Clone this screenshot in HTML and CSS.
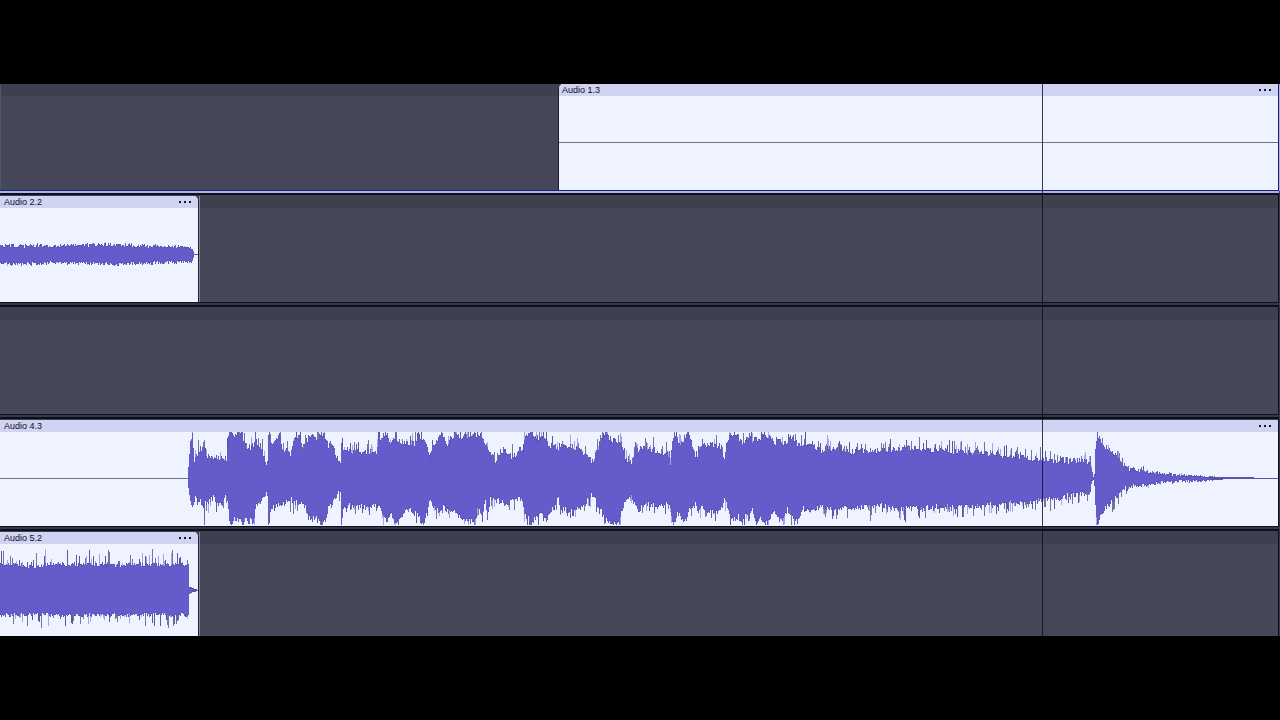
FILE: index.html
```
<!DOCTYPE html>
<html lang="en">
<head>
    <meta charset="UTF-8">
    <meta name="viewport" content="width=device-width, initial-scale=1.0">
    <title>Audio Tracks</title>
    <link rel="stylesheet" href="styles.css">
</head>
<body>
    <main class="timeline">
        <section class="track track-first selected">
            <div class="lane"></div>
            <article class="clip clip-start">
                <header class="clip-header">
                    <span>Audio 1.3</span>
                    <button type="button" class="clip-menu" aria-label="Audio 1.3 menu"><i></i><i></i><i></i></button>
                </header>
                <div class="clip-body"><hr class="silence"></div>
            </article>
        </section>

        <section class="track track-short">
            <article class="clip clip-end">
                <header class="clip-header">
                    <span>Audio 2.2</span>
                    <button type="button" class="clip-menu" aria-label="Audio 2.2 menu"><i></i><i></i><i></i></button>
                </header>
                <div class="clip-body">
                    <svg class="wave" data-wave="audio2" viewBox="0 0 199 94" preserveAspectRatio="none"></svg>
                </div>
            </article>
            <div class="lane"></div>
        </section>

        <section class="track">
            <div class="lane"></div>
        </section>

        <section class="track">
            <article class="clip">
                <header class="clip-header">
                    <span>Audio 4.3</span>
                    <button type="button" class="clip-menu" aria-label="Audio 4.3 menu"><i></i><i></i><i></i></button>
                </header>
                <div class="clip-body">
                    <svg class="wave" data-wave="audio4" viewBox="0 0 1278 94" preserveAspectRatio="none"></svg>
                </div>
            </article>
        </section>

        <section class="track track-short track-last">
            <article class="clip clip-end">
                <header class="clip-header">
                    <span>Audio 5.2</span>
                    <button type="button" class="clip-menu" aria-label="Audio 5.2 menu"><i></i><i></i><i></i></button>
                </header>
                <div class="clip-body">
                    <svg class="wave" data-wave="audio5" viewBox="0 0 199 92" preserveAspectRatio="none"></svg>
                </div>
            </article>
            <div class="lane"></div>
        </section>

        <div class="playhead"></div>
    </main>

    <script src="waves.js"></script>
</body>
</html>
```
FILE: styles.css
```
* {
    box-sizing: border-box;
}

body {
    margin: 0;
    min-height: 100vh;
    display: flex;
    flex-direction: column;
    justify-content: center;
    background: #000;
    font-family: "Liberation Sans", Arial, sans-serif;
    font-size: 9px;
    color: #0c0c1c;
}

.timeline {
    position: relative;
    overflow: hidden;
    background: #363846;
}

.track {
    display: grid;
    grid-template-columns: 1fr;
    height: 110px;
    margin: 0 1px 2px 0;
    padding-top: 1px;
    background: #3e4050;
    border: solid #0d0f1c;
    border-width: 2px 1px 1px 0;
}

.track-first {
    grid-template-columns: 558fr 720fr;
    height: 107px;
    padding-top: 0;
    border-top: 0;
}

.track-first .lane {
    border-left: 1px solid #4a5878;
}

.track-short {
    grid-template-columns: 199fr 1079fr;
}

.track-short .lane {
    border-left: 1px solid #858999;
}

.track-last {
    height: 107px;
    margin-bottom: 0;
    border-bottom: 0;
}

.selected {
    border-color: #1c2464;
    box-shadow: 0 2px 0 #a9b4ee, 1px 0 0 #a9b4ee;
}

.lane {
    background: linear-gradient(#3e4050 12px, #454758 12px);
}

.clip {
    display: flex;
    flex-direction: column;
    min-width: 0;
    overflow: hidden;
    background: #eff3ff;
}

.clip-start {
    border-left: 1px solid #1e2030;
    border-top-left-radius: 5px;
}

.clip-end {
    border-right: 1px solid #1e2030;
    border-top-right-radius: 5px;
}

.clip-header {
    display: flex;
    justify-content: space-between;
    align-items: center;
    height: 12px;
    padding: 0 7px 0 4px;
    background: #d0d4f2;
}

.clip-start .clip-header {
    padding-left: 3px;
}

.clip-menu {
    display: flex;
    gap: 3px;
    padding: 2px 0;
    border: 0;
    background: none;
    cursor: pointer;
}

.clip-menu i {
    width: 2px;
    height: 2px;
    background: #15152a;
}

.clip-body {
    flex: 1;
    min-height: 0;
    display: flex;
}

.silence {
    flex: 1;
    margin: 46px 0 0;
    border: 0;
    border-top: 1px solid #707284;
}

.wave {
    display: block;
    width: 100%;
    height: 100%;
    shape-rendering: crispEdges;
}

.wave-body {
    fill: #655bcb;
}

.wave-edge {
    fill: #5b55a6;
}

.wave-soft {
    fill: #a8a1f2;
}

.wave-peak {
    fill: #74759a;
}

.wave-axis {
    fill: #707284;
}

.playhead {
    position: absolute;
    top: 0;
    bottom: 0;
    left: 81.4%;
    width: 1px;
    background: rgba(10, 10, 30, 0.8);
}
```
FILE: waves.js
```
// Envelopes: x, top, bottom for each breakpoint, joined by straight lines
const WAVES = {
    audio2: {
        axis: 46, jitter: 2, spike: 3, from: 0,
        points: [0,38,55, 20,38,56, 50,38,55, 80,37,55, 110,37,56, 130,37,56, 150,38,55, 170,38,54, 185,39,54, 192,40,54, 194,43,50, 195,46,47, 199,46,47]
    },
    audio4: {
        axis: 46, jitter: 3, spike: 11, from: 188,
        points: [
            188,34,58, 190,11,68, 192,2,74, 194,31,68, 197,22,66, 200,16,70, 203,17,74, 204,17,89, 205,23,71, 209,25,69,
            211,30,66, 213,28,66, 216,25,71, 219,26,73, 223,25,70, 226,27,63, 228,13,76, 229,2,86, 231,0,92, 234,2,84,
            236,1,90, 239,2,86, 242,2,92, 245,13,84, 248,14,91, 251,16,87, 253,18,92, 255,1,76, 257,16,71, 260,14,72,
            263,22,66, 266,30,60, 267,30,60, 268,0,92, 270,10,78, 273,12,75, 276,8,73, 279,1,74, 282,18,72, 286,18,70,
            290,22,67, 293,8,70, 295,6,71, 299,5,71, 302,18,72, 305,10,76, 309,4,86, 312,2,88, 315,6,84, 318,4,89,
            322,1,86, 325,6,92, 328,14,77, 330,10,75, 333,16,71, 336,23,65, 338,29,62, 340,32,60, 341,8,92, 343,20,78,
            346,16,74, 350,20,74, 354,18,75, 360,22,74, 365,20,75, 370,19,74, 376,22,71, 378,6,76, 381,8,78, 384,1,84,
            387,2,90, 390,12,80, 395,4,91, 400,10,88, 405,11,76, 410,12,78, 415,12,82, 419,4,86, 421,4,91, 424,8,88,
            427,12,76, 430,27,68, 432,12,74, 436,8,78, 440,2,82, 443,5,76, 447,14,80, 450,8,76, 455,4,82, 460,4,86,
            466,4,88, 470,2,90, 474,3,87, 478,2,76, 482,3,86, 485,14,68, 487,15,87, 490,20,68, 494,28,67, 496,29,68,
            499,20,69, 503,17,71, 507,20,72, 511,25,68, 516,22,67, 520,17,68, 523,20,72, 524,8,80, 526,2,82, 530,1,92,
            533,2,89, 537,8,82, 541,6,80, 546,8,90, 550,14,78, 555,14,76, 558,18,65, 560,12,80, 565,14,76, 570,14,80,
            575,16,75, 580,18,77, 585,22,72, 590,26,64, 592,30,61, 595,22,68, 598,18,76, 600,8,78, 605,1,88, 610,8,91,
            615,9,92, 619,11,91, 622,13,76, 625,28,68, 629,30,64, 632,32,65, 635,12,71, 638,20,80, 640,15,76, 645,16,73,
            650,18,72, 655,18,75, 661,22,74, 665,20,73, 669,23,71, 670,34,76, 672,8,88, 674,2,91, 677,8,82, 680,13,83,
            683,8,90, 686,1,88, 688,2,78, 691,10,77, 695,24,72, 698,21,80, 702,8,74, 706,16,79, 710,12,80, 715,13,81,
            720,14,78, 723,27,71, 724,29,67, 726,12,73, 730,4,86, 735,1,88, 738,5,84, 741,10,90, 744,11,82, 749,2,87,
            752,13,78, 755,6,90, 760,6,86, 765,2,91, 770,5,86, 774,11,78, 778,6,88, 783,10,88, 787,10,78, 791,4,80,
            797,12,91, 802,13,76, 806,12,80, 812,11,78, 816,18,76, 822,18,75, 830,16,76, 840,18,76, 850,20,75, 860,18,75,
            870,19,76, 880,18,74, 890,17,76, 905,16,77, 915,16,76, 930,19,76, 945,18,74, 960,20,76, 975,20,74, 990,22,73,
            1015,25,71, 1030,26,71, 1040,28,69, 1050,28,67, 1060,29,66, 1070,29,63, 1080,28,62, 1086,28,61, 1090,32,60,
            1092,40,50, 1093,45,48, 1094,42,52, 1095,18,73, 1097,0,91, 1099,6,88, 1102,12,80, 1107,17,74, 1112,20,68,
            1118,28,63, 1124,34,57, 1130,37,55, 1140,39,53, 1150,40,52, 1165,42,50, 1180,43,49, 1200,44,49, 1215,45,48,
            1230,45,47, 1278,46,47
        ]
    },
    audio5: {
        axis: 46, jitter: 2, spike: 14, from: 0,
        points: [0,20,71, 20,21,71, 34,23,70, 50,20,71, 80,20,71, 110,21,71, 140,20,71, 160,21,71, 189,20,71, 190,43,50, 193,44,48, 199,46,47]
    }
};

// Small seeded generator so that the waves are the same on every load
function seeded(seed) {
    return () => {
        seed = (seed * 1664525 + 1013904223) % 4294967296;
        return seed / 4294967296;
    };
}

function drawWave(svg) {
    const wave = WAVES[svg.dataset.wave];
    const { width, height } = svg.viewBox.baseVal;
    const random = seeded(width + wave.spike);
    const paths = { axis: '', peak: '', soft: '', edge: '', body: '' };
    const bar = (kind, x, top, bottom) => {
        top = Math.max(0, Math.round(top));
        bottom = Math.min(height - 1, Math.round(bottom));
        paths[kind] += `M${x} ${top}h1V${bottom}h-1z`;
    };
    const spikeKind = () => {
        const r = random();
        return r < 0.3 ? 'soft' : r < 0.65 ? 'peak' : 'edge';
    };

    paths.axis = `M0 ${wave.axis}h${width}v1h-${width}z`;

    let i = 0;
    for (let x = wave.from; x < width; x++) {
        const p = wave.points;
        while (i + 3 < p.length - 3 && p[i + 3] <= x) i += 3;
        const t = (x - p[i]) / (p[i + 3] - p[i]);
        let top = p[i + 1] + (p[i + 4] - p[i + 1]) * t;
        let bottom = p[i + 2] + (p[i + 5] - p[i + 2]) * t;
        const size = bottom - top;
        const jitter = size > 3 ? wave.jitter * Math.min(1, size / 20) : 0;
        const spike = size > 3 ? wave.spike * Math.min(1, size / 40) : 0;
        top += (random() - 0.5) * 2 * jitter;
        bottom += (random() - 0.5) * 2 * jitter;

        if (random() < 0.34) {
            bar(spikeKind(), x, top - random() * spike, bottom);
        }
        if (random() < 0.34) {
            bar(spikeKind(), x, top, bottom + random() * spike);
        }
        bar('edge', x, top, bottom);
        if (size > 4) bar('body', x, top + 1, bottom - 1);
    }

    for (const kind in paths) {
        const path = document.createElementNS('http://www.w3.org/2000/svg', 'path');
        path.setAttribute('class', 'wave-' + kind);
        path.setAttribute('d', paths[kind]);
        svg.appendChild(path);
    }
}

document.querySelectorAll('.wave').forEach(drawWave);
```
